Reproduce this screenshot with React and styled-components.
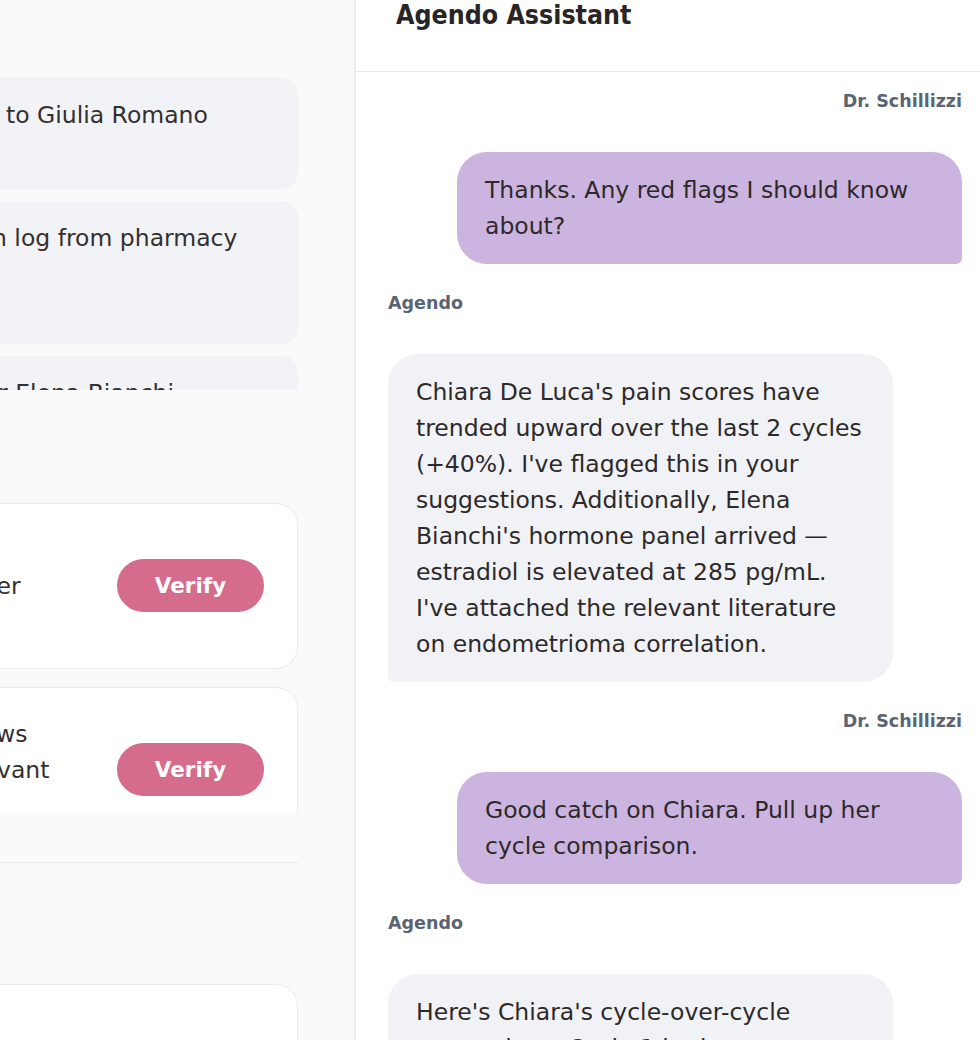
import styled, { createGlobalStyle } from "styled-components";

// base page styles
const GlobalStyle = createGlobalStyle`
  html, body {
    margin: 0;
    padding: 0;
    background: #ffffff;
  }
  body {
    font-family: "DejaVu Sans", "Open Sans", sans-serif;
    color: #2d2929;
  }
  * {
    box-sizing: border-box;
  }
`;

const Screen = styled.div`
  display: flex;
  width: 980px;
  height: 1040px;
  overflow: hidden;
`;

/* ---------- left side: task queues ---------- */

const Sidebar = styled.aside`
  width: 356px;
  flex-shrink: 0;
  background: #fafafa;
  border-right: 2px solid #ededed;
  overflow: hidden;
`;

const Track = styled.div`
  display: flex;
  flex-direction: column;
  width: 338px;
  margin-left: -40px;
`;

const Queue = styled.div`
  display: flex;
  flex-direction: column;
  flex-shrink: 0;
  height: ${(p) => p.$h}px;
  padding-top: ${(p) => p.$top || 0}px;
  gap: ${(p) => p.$gap}px;
  overflow: hidden;
`;

const SectionGap = styled.div`
  flex-shrink: 0;
  height: ${(p) => p.$h}px;
`;

const TaskCard = styled.div`
  flex-shrink: 0;
  height: ${(p) => p.$h}px;
  padding: 19px 0 0 40px;
  background: #f2f3f7;
  border-radius: 16px;
`;

const ReviewCard = styled.div`
  flex-shrink: 0;
  display: flex;
  align-items: center;
  justify-content: space-between;
  height: ${(p) => p.$h || 166}px;
  padding: 0 33px 0 38.5px;
  background: #ffffff;
  border: 1.5px solid #ebebeb;
  border-radius: 22px;
`;

const CardText = styled.div`
  display: flex;
  flex-direction: column;
`;

const Line = styled.span`
  display: block;
  margin-left: ${(p) => p.$shift || 0}px;
  font-size: 23.5px;
  line-height: 36px;
  white-space: nowrap;
  color: #342f2f;
`;

const VerifyButton = styled.button`
  flex-shrink: 0;
  width: 147px;
  height: 53px;
  margin-top: -1px;
  border: none;
  border-radius: 27px;
  background: #d56c8c;
  color: #ffffff;
  font-family: "DejaVu Sans", sans-serif;
  font-size: 21.5px;
  font-weight: 700;
  cursor: pointer;
`;

const Divider = styled.hr`
  flex-shrink: 0;
  width: 100%;
  height: 1.5px;
  margin: 48.5px 0 0;
  border: none;
  background: #e9e9e9;
`;

/* ---------- right side: assistant chat ---------- */

const Chat = styled.section`
  flex: 1;
  min-width: 0;
  display: flex;
  flex-direction: column;
  background: #ffffff;
`;

const ChatHeader = styled.header`
  flex-shrink: 0;
  height: 71.5px;
  padding-left: 40px;
  border-bottom: 1.5px solid #ebebeb;
`;

const Title = styled.h1`
  margin: 0;
  font-family: "DejaVu Sans Condensed", "DejaVu Sans", sans-serif;
  font-stretch: condensed;
  font-size: 26.5px;
  font-weight: 700;
  line-height: 30px;
  color: #2a2525;
`;

const Messages = styled.div`
  display: flex;
  flex-direction: column;
  padding: 17px 18px 0 32px;
`;

const Group = styled.div`
  display: flex;
  flex-direction: column;
  align-items: ${(p) => (p.$mine ? "flex-end" : "flex-start")};

  & + & {
    margin-top: 27px;
  }
`;

const Sender = styled.div`
  margin-bottom: 39px;
  font-size: 17.5px;
  font-weight: 700;
  line-height: 24px;
  color: #5a6472;
`;

const Bubble = styled.div`
  width: 505px;
  padding: 20px 28px;
  font-size: 23.5px;
  line-height: 36px;
  white-space: nowrap;
  color: #2d2929;
  background: ${(p) => (p.$mine ? "#cbb4df" : "#f1f2f6")};
  border-radius: ${(p) => (p.$mine ? "30px 30px 6px 30px" : "30px 30px 30px 6px")};
`;

const messages = [
  {
    mine: true,
    lines: ["Thanks. Any red flags I should know", "about?"],
  },
  {
    mine: false,
    lines: [
      "Chiara De Luca's pain scores have",
      "trended upward over the last 2 cycles",
      "(+40%). I've flagged this in your",
      "suggestions. Additionally, Elena",
      "Bianchi's hormone panel arrived —",
      "estradiol is elevated at 285 pg/mL.",
      "I've attached the relevant literature",
      "on endometrioma correlation.",
    ],
  },
  {
    mine: true,
    lines: ["Good catch on Chiara. Pull up her", "cycle comparison."],
  },
  {
    mine: false,
    lines: ["Here's Chiara's cycle-over-cycle", "comparison. Cycle 1 had a mean"],
  },
];

const App = () => {
  return (
    <>
      <GlobalStyle />
      <Screen>
        <Sidebar>
          <Track>
            <Queue $h={390} $top={78} $gap={12}>
              <TaskCard $h={111}>
                <Line $shift={6}>to Giulia Romano</Line>
              </TaskCard>
              <TaskCard $h={143}>
                <Line $shift={-8}>n log from pharmacy</Line>
              </TaskCard>
              <TaskCard $h={111}>
                <Line $shift={-2}>r Elena Bianchi</Line>
              </TaskCard>
            </Queue>

            <SectionGap $h={113} />

            <Queue $h={310} $gap={18}>
              <ReviewCard>
                <CardText>
                  <Line>&nbsp;</Line>
                  <Line $shift={-3}>er</Line>
                  <Line>&nbsp;</Line>
                </CardText>
                <VerifyButton>Verify</VerifyButton>
              </ReviewCard>
              <ReviewCard>
                <CardText>
                  <Line $shift={-3.5}>ws</Line>
                  <Line $shift={-2.5}>vant</Line>
                  <Line>&nbsp;</Line>
                </CardText>
                <VerifyButton>Verify</VerifyButton>
              </ReviewCard>
            </Queue>

            <Divider />
            <SectionGap $h={121} />
            <ReviewCard $h={120} />
          </Track>
        </Sidebar>

        <Chat>
          <ChatHeader>
            <Title>Agendo Assistant</Title>
          </ChatHeader>
          <Messages>
            {messages.map((msg, i) => (
              <Group key={i} $mine={msg.mine}>
                <Sender>{msg.mine ? "Dr. Schillizzi" : "Agendo"}</Sender>
                <Bubble $mine={msg.mine}>
                  {msg.lines.map((line, j) => (
                    <span key={j}>
                      {j > 0 && <br />}
                      {line}
                    </span>
                  ))}
                </Bubble>
              </Group>
            ))}
          </Messages>
        </Chat>
      </Screen>
    </>
  );
};

export default App;
